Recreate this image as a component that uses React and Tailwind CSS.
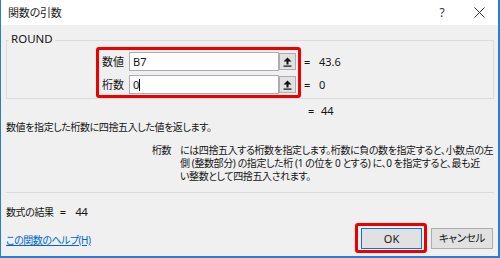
export default function App() {
  const Arrow = () => (
    <svg width="9" height="10" viewBox="0 0 9 10">
      <polygon points="4.5,0.5 0.5,4.5 8.5,4.5" fill="#111" />
      <rect x="3.5" y="4" width="2" height="3.5" fill="#111" />
      <rect x="0.5" y="8.5" width="8" height="1.2" fill="#111" />
    </svg>
  );
  const Row = ({ label, value, caret }) => (
    <div className="flex items-center h-[19px]">
      <span className="w-[27px] shrink-0 leading-[14px] text-[11px]">{label}</span>
      <div className="w-[150px] shrink-0 h-[19px] border border-[#abadb3] bg-white flex items-center pl-[3px] text-[11px] leading-[14px]">
        {value}
        {caret && <span className="inline-block w-px h-[12px] bg-black" />}
      </div>
      <div className="w-[17px] h-[17px] shrink-0 border border-[#adadad] bg-[#e1e1e1] flex items-center justify-center">
        <Arrow />
      </div>
    </div>
  );
  return (
    <div className="w-[500px] h-[258px] bg-[#f0f0f0] border-l border-r-2 border-b-2 border-[#2b7dd1] flex flex-col text-[11px] leading-[14px] text-[#151515] font-['Noto_Sans','Noto_Sans_CJK_JP',sans-serif] [font-feature-settings:'palt'] overflow-hidden">
      <div className="h-[25px] bg-white flex items-center shrink-0">
        <span className="ml-[7px] text-[11px] tracking-[-0.2px] text-[#222]">関数の引数</span>
        <span className="ml-auto w-[12px] text-center text-[12px] text-[#333]">?</span>
        <svg className="ml-[26px] mr-[13px]" width="11" height="11" viewBox="0 0 11 11">
          <path d="M0.5 0.5 L10.5 10.5 M10.5 0.5 L0.5 10.5" stroke="#333" strokeWidth="1" />
        </svg>
      </div>

      <div className="relative mt-[15px] ml-[5px] w-[488px] h-[59px] border border-[#dcdcdc] shrink-0">
        <span className="absolute left-[2px] top-[-9px] px-[2px] bg-[#f0f0f0] leading-[14px] text-[11.5px]">ROUND</span>
        <div className="flex items-start ml-[89px] mt-[6px]">
          <div className="border-[3px] border-[#ee0000] rounded-[3px] pt-[2px] pb-[1px] pl-[3px] pr-[2px] flex flex-col gap-[4px]">
            <Row label="数値" value="B7" />
            <Row label="桁数" value="0" caret />
          </div>
          <div className="ml-[3px] pt-[5px] flex flex-col gap-[4px]">
            <div className="h-[19px] flex items-center">
              <span className="w-[15px]">=</span>
              <span>43.6</span>
            </div>
            <div className="h-[19px] flex items-center">
              <span className="w-[15px]">=</span>
              <span>0</span>
            </div>
          </div>
        </div>
      </div>

      <div className="mt-[5px] h-[14px] flex items-center pl-[307px] shrink-0">
        <span className="w-[13px]">=</span>
        <span>44</span>
      </div>

      <div className="mt-[2px] h-[14px] pl-[5px] whitespace-nowrap shrink-0 text-[10px] tracking-[-0.4px]">
        数値を指定した桁数に四捨五入した値を返します。
      </div>

      <div className="mt-[10px] flex pl-[151px] shrink-0 text-[10px] tracking-[-0.4px]">
        <span className="w-[28px] shrink-0 leading-[13px]">桁数</span>
        <div className="flex flex-col leading-[13px] whitespace-nowrap">
          <span>には四捨五入する桁数を指定します。桁数に負の数を指定すると、小数点の左</span>
          <span>側 (整数部分) の指定した桁 (1 の位を 0 とする) に、0 を指定すると、最も近</span>
          <span>い整数として四捨五入されます。</span>
        </div>
      </div>

      <div className="mt-[9px] ml-[5px] w-[488px] h-px bg-[#dadada] shrink-0" />

      <div className="mt-[12px] h-[14px] pl-[5px] flex items-center shrink-0 text-[10px] tracking-[-0.4px]">
        <span>数式の結果</span>
        <span className="ml-[6px] text-[11px]">=</span>
        <span className="ml-[10px] text-[11px]">44</span>
      </div>

      <div className="mt-[4px] h-[30px] flex items-center shrink-0">
        <a className="ml-[5px] mt-[4px] text-[10px] tracking-[-0.5px] text-[#0066cc] underline cursor-pointer">この関数のヘルプ(H)</a>
        <div className="ml-auto border-[3px] border-[#ee0000] rounded-[3px] pt-[2px] pb-[1px] pl-[3px] pr-[2px]">
          <div className="w-[61px] h-[21px] border border-[#0078d7] bg-[#e1e1e1] flex items-center justify-center">OK</div>
        </div>
        <div className="ml-[4px] mr-[5px] w-[62px] h-[21px] border border-[#adadad] bg-[#e1e1e1] flex items-center justify-center text-[10.5px] tracking-[-0.3px]">キャンセル</div>
      </div>
    </div>
  );
}
